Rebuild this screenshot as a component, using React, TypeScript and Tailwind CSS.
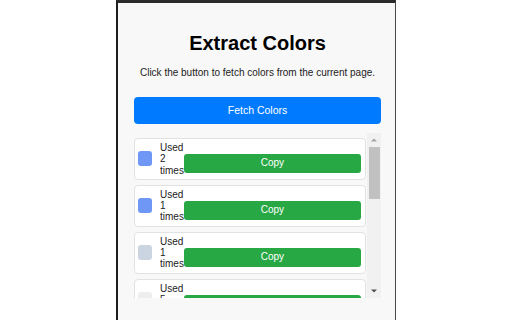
const colors = [
  { hex: "#6f97f6", count: 2 },
  { hex: "#6f97f6", count: 1 },
  { hex: "#cbd5e1", count: 1 },
  { hex: "#eeeeee", count: 5 },
];

const ColorRow = ({ hex, count }: { hex: string; count: number }) => (
  <div className="flex items-center bg-white border border-[#e2e2e2] rounded-[4px] pl-[3px] pr-[4px] py-[3px] shrink-0">
    <div className="w-[14px] h-[15px] rounded-[3px] shrink-0" style={{ backgroundColor: hex }} />
    <div className="ml-[8px] w-min text-[10px] leading-[11.3px] text-[#222]">
      Used {count} times
    </div>
    <button className="flex-1 mt-[9px] h-[19px] rounded-[3px] bg-[#28a745] text-white text-[10px] leading-none">
      Copy
    </button>
  </div>
);

export default function App() {
  return (
    <div className="w-[512px] h-[320px] bg-white flex justify-center overflow-hidden font-['Liberation_Sans',Arial,sans-serif]">
      <div className="w-[280px] h-[320px] bg-[#f8f8f8] border-l-2 border-l-[#1e1e1e] border-r border-r-[#4a4a4a] border-t-[3px] border-t-[#2b2b2b] pl-[16px] pr-[14px] flex flex-col">
        <h1 className="mt-[28px] text-[20px] leading-[24px] font-bold text-center text-black">Extract Colors</h1>
        <p className="mt-[11px] text-[10px] leading-[14px] text-center text-[#222]">
          Click the button to fetch colors from the current page.
        </p>
        <button className="mt-[17px] h-[27px] w-full rounded-[4px] bg-[#007bff] text-white text-[10.5px]">
          Fetch Colors
        </button>
        <div className="mt-[9px] h-[165px] flex gap-[1px]">
          <div className="flex-1 overflow-hidden flex flex-col gap-[5px] pt-[5px]">
            {colors.map((c, i) => (
              <ColorRow key={i} hex={c.hex} count={c.count} />
            ))}
          </div>
          {/* scrollbar */}
          <div className="w-[14px] bg-[#f1f1f1] flex flex-col items-center">
            <svg width="14" height="14" viewBox="0 0 14 14" className="shrink-0">
              <path d="M4 8.5 L7 5.5 L10 8.5 Z" fill="#a3a3a3" />
            </svg>
            <div className="w-[11px] h-[52px] bg-[#c1c1c1]" />
            <div className="flex-1" />
            <svg width="14" height="14" viewBox="0 0 14 14" className="shrink-0">
              <path d="M4 5.5 L10 5.5 L7 8.5 Z" fill="#505050" />
            </svg>
          </div>
        </div>
      </div>
    </div>
  );
}
